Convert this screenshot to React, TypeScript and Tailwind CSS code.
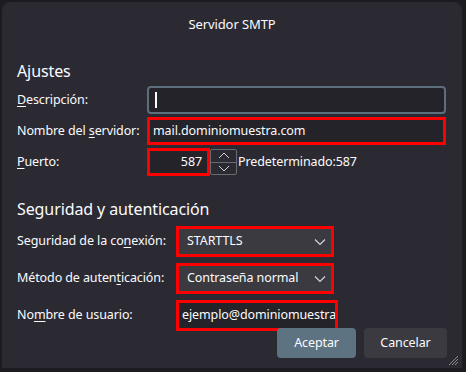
import React from "react";

const U = ({ children }: { children: React.ReactNode }) => <span className="underline underline-offset-2">{children}</span>;

const Chevron = () => (
  <svg width="12" height="8" viewBox="0 0 12 8" className="shrink-0">
    <path d="M1 1.5 L6 6.5 L11 1.5" fill="none" stroke="#d8d8dc" strokeWidth="1.1" />
  </svg>
);

export default function App() {
  return (
    <div
      className="w-[466px] h-[372px] bg-[#1c1b22] pt-[2px] px-[2px] overflow-hidden text-[#fbfbfe]"
      style={{ fontFamily: '"Noto Sans", "Open Sans", sans-serif' }}
    >
      <div className="w-[460px] h-[366px] bg-[#2b2a33] rounded-t-[8px] relative flex flex-col text-[12.5px] tracking-[-0.1px]">
        <div className="h-[44px] flex items-center justify-center text-[13px] pt-[2px]">Servidor SMTP</div>
        <div className="pl-[15px] pr-[16px] pt-[14px]">
          <div className="text-[16px] leading-[22px] h-[26px]">Ajustes</div>
          <div className="grid grid-cols-[130px_1fr] items-center gap-y-[3px]">
            <div><U>D</U>escripción:</div>
            <div className="h-[28px] border-2 border-[#5d6f7c] rounded-[4px] bg-[#242329] flex items-center px-[6px]">
              <div className="w-[1.5px] h-[16px] bg-[#fbfbfe]" />
            </div>
            <div>Nombre del <U>s</U>ervidor:</div>
            <div className="h-[28px] border-[3px] border-[#ff0000] bg-[#242329] flex items-center px-[3px]">mail.dominiomuestra.com</div>
            <div><U>P</U>uerto:</div>
            <div className="flex items-center h-[28px]">
              <div className="w-[63px] h-[28px] border-[3px] border-[#ff0000] bg-[#242329] flex items-center justify-end pr-[5px]">587</div>
              <div className="w-[27px] h-[26px] border border-[#6b6a70] rounded-[2px] flex flex-col bg-[#2b2a33]">
                <div className="flex-1 flex items-center justify-center border-b border-[#6b6a70]">
                  <svg width="12" height="7" viewBox="0 0 12 7"><path d="M1 6 L6 1 L11 6" fill="none" stroke="#d0d0d4" strokeWidth="1" /></svg>
                </div>
                <div className="flex-1 flex items-center justify-center">
                  <svg width="12" height="7" viewBox="0 0 12 7"><path d="M1 1 L6 6 L11 1" fill="none" stroke="#d0d0d4" strokeWidth="1" /></svg>
                </div>
              </div>
              <span className="ml-[1px]">Predeterminado:587</span>
            </div>
          </div>
          <div className="text-[16px] leading-[22px] mt-[22px] h-[28px]">Seguridad y autenticación</div>
          <div className="grid grid-cols-[159px_162px] items-center gap-y-[6px]">
            <div>Seguridad de la co<U>n</U>exión:</div>
            <div className="w-[158px] h-[31px] border-[3px] border-[#ff0000] bg-[#3b3a41] flex items-center justify-between pl-[8px] pr-[5px]">
              <span>STARTTLS</span>
              <Chevron />
            </div>
            <div>Método de auten<U>t</U>icación:</div>
            <div className="w-[158px] h-[31px] border-[3px] border-[#ff0000] bg-[#3b3a41] flex items-center justify-between pl-[8px] pr-[5px]">
              <span>Contraseña normal</span>
              <Chevron />
            </div>
            <div>No<U>m</U>bre de usuario:</div>
            <div className="h-[31px] border-[3px] border-[#ff0000] bg-[#242329] flex items-center px-[3px] overflow-hidden whitespace-nowrap">
              ejemplo@dominiomuestra.com
            </div>
          </div>
        </div>
        <div className="flex justify-end gap-[8px] pr-[15px] -mt-[3px]">
          <div className="w-[79px] h-[30px] rounded-[4px] bg-[#5d7382] flex items-center justify-center">Aceptar</div>
          <div className="w-[83px] h-[30px] rounded-[4px] bg-[#3b3a41] flex items-center justify-center">Cancelar</div>
        </div>
        <svg className="absolute right-[3px] bottom-[2px]" width="12" height="12" viewBox="0 0 12 12">
          <path d="M11 2 L2 11 M11 5 L5 11 M11 8 L8 11" stroke="#8a8990" strokeWidth="1" />
        </svg>
      </div>
    </div>
  );
}
